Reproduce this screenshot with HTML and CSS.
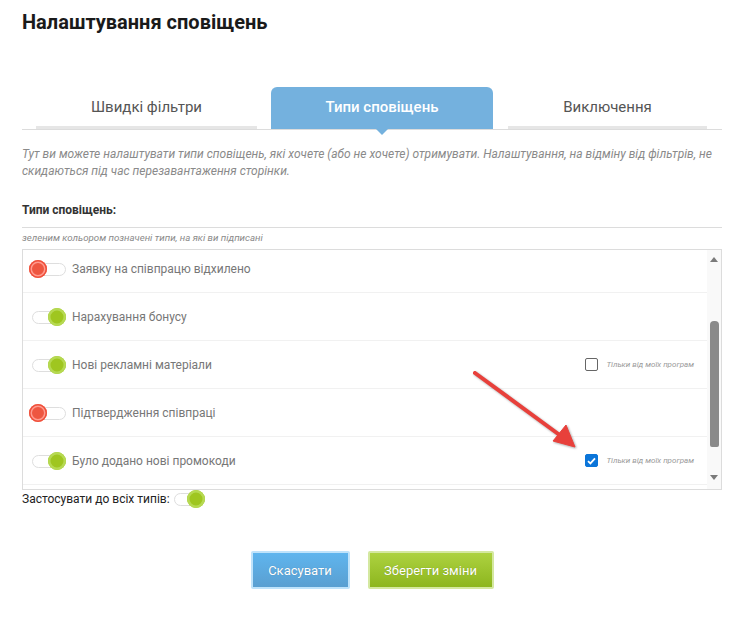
FILE: index.html
```html
<!DOCTYPE html>
<html lang="uk">

<head>
    <meta charset="UTF-8">
    <meta name="viewport" content="width=device-width, initial-scale=1.0">
    <title>Налаштування сповіщень</title>
    <link rel="stylesheet" href="styles.css">
</head>

<body>
    <div class="page">
        <h1>Налаштування сповіщень</h1>

        <div class="tabs">
            <div class="tab tab-first">Швидкі фільтри</div>
            <div class="tab tab-active">Типи сповіщень</div>
            <div class="tab tab-last">Виключення</div>
        </div>

        <div class="explanation">
            Тут ви можете налаштувати типи сповіщень, які хочете (або не хочете) отримувати. Налаштування, на відміну від фільтрів, не
            скидаються під час перезавантаження сторінки.
        </div>

        <div class="types-title">Типи сповіщень:</div>
        <div class="types-hint">зеленим кольором позначені типи, на які ви підписані</div>

        <div class="types-box">
            <div class="types-list">
                <div class="type-row">
                    <span class="toggle off"><span class="knob"></span></span>
                    <span class="type-label">Заявку на співпрацю відхилено</span>
                </div>
                <div class="type-row">
                    <span class="toggle on"><span class="knob"></span></span>
                    <span class="type-label">Нарахування бонусу</span>
                </div>
                <div class="type-row">
                    <span class="toggle on"><span class="knob"></span></span>
                    <span class="type-label">Нові рекламні матеріали</span>
                    <label class="own-only"><span class="check"></span>Тільки від моїх програм</label>
                </div>
                <div class="type-row">
                    <span class="toggle off"><span class="knob"></span></span>
                    <span class="type-label">Підтвердження співпраці</span>
                </div>
                <div class="type-row">
                    <span class="toggle on"><span class="knob"></span></span>
                    <span class="type-label">Було додано нові промокоди</span>
                    <label class="own-only"><span class="check checked"><svg width="9" height="8" viewBox="0 0 9 8"><path d="M1 4.2 L3.4 6.4 L8 1.4" fill="none" stroke="#fff" stroke-width="1.8"/></svg></span>Тільки від моїх програм</label>
                </div>
            </div>
            <div class="scrollbar">
                <span class="arrow-up"></span>
                <div class="track"><div class="thumb"></div></div>
                <span class="arrow-down"></span>
            </div>
            <svg class="pointer" width="120" height="90" viewBox="0 0 120 90">
                <g fill="#e8403b" stroke="#e8403b">
                    <line x1="4" y1="3" x2="90" y2="66" stroke-width="4" stroke-linecap="round"/>
                    <polygon points="104,77 82,71 95,55" stroke-width="1" stroke-linejoin="round"/>
                </g>
            </svg>
        </div>

        <div class="apply-all">
            <span>Застосувати до всіх типів:</span>
            <span class="toggle on small"><span class="knob"></span></span>
        </div>

        <div class="buttons">
            <button class="btn btn-cancel">Скасувати</button>
            <button class="btn btn-save">Зберегти зміни</button>
        </div>
    </div>
</body>

</html>
```

FILE: styles.css
```css
body {
    font-family: Roboto, "Noto Sans", Arial, sans-serif;
    margin: 0;
    padding: 0;
    background-color: white;
    color: #222;
}

.page {
    width: 700px;
    margin-left: 22px;
}

h1 {
    font-size: 20px;
    line-height: 24px;
    font-weight: bold;
    margin: 10px 0 0;
    color: #1a1a1a;
}

.tabs {
    display: flex;
    align-items: flex-end;
    margin-top: 53px;
    padding-left: 14px;
    border-bottom: 1px solid #dcdcdc;
    height: 42px;
}

.tab {
    height: 42px;
    box-sizing: border-box;
    text-align: center;
    font-size: 15px;
    line-height: 41px;
    color: #555;
    border-bottom: 3px solid #e6e6e6;
}

.tab-first {
    width: 221px;
}

.tab-active {
    position: relative;
    width: 222px;
    margin-left: 14px;
    border-bottom: none;
    background-color: #74b1de;
    border-radius: 6px 6px 0 0;
    color: white;
    font-weight: 500;
    line-height: 40px;
}

.tab-active::after {
    content: "";
    position: absolute;
    left: 50%;
    bottom: -6px;
    margin-left: -6px;
    border-left: 6px solid transparent;
    border-right: 6px solid transparent;
    border-top: 6px solid #74b1de;
}

.tab-last {
    width: 199px;
    margin-left: 15px;
}

.explanation {
    margin-top: 16px;
    font-size: 12px;
    line-height: 17px;
    font-style: italic;
    color: #8a8a8a;
}

.types-title {
    margin-top: 23px;
    font-size: 12px;
    line-height: 15px;
    font-weight: bold;
    color: #333;
    padding-bottom: 9px;
    border-bottom: 1px solid #dcdcdc;
}

.types-hint {
    font-size: 9.7px;
    line-height: 12px;
    font-style: italic;
    color: #8a8a8a;
    padding: 4px 0 5px;
}

.types-box {
    position: relative;
    display: flex;
    height: 239px;
    border: 1px solid #dcdcdc;
    overflow: hidden;
}

.types-list {
    flex: 1;
    margin-top: -5px;
}

.type-row {
    display: flex;
    align-items: center;
    height: 47px;
    padding-left: 6px;
    padding-right: 13px;
    border-bottom: 1px solid #f1f1f1;
}

.toggle {
    position: relative;
    display: inline-block;
    width: 37px;
    height: 18px;
    flex-shrink: 0;
}

.toggle::before {
    content: "";
    position: absolute;
    left: 3px;
    right: 0;
    top: 3px;
    height: 11px;
    border: 1px solid #dedede;
    border-radius: 7px;
    background-color: white;
}

.knob {
    position: absolute;
    top: 0;
    width: 18px;
    height: 18px;
    border-radius: 50%;
    box-sizing: border-box;
}

.off .knob {
    left: 0;
    background-color: #ee5640;
    box-shadow: inset 0 0 0 1.5px #ef4f3a, inset 0 0 0 3px #ff9a8e;
}

.on .knob {
    right: 0;
    background-color: #9fc620;
    box-shadow: inset 0 0 0 2.5px #b6d952;
}

.type-label {
    margin-left: 6px;
    font-size: 12px;
    color: #777;
}

.own-only {
    margin-left: auto;
    display: flex;
    align-items: center;
    font-size: 8px;
    font-style: italic;
    color: #9a9a9a;
}

.check {
    display: inline-flex;
    align-items: center;
    justify-content: center;
    width: 13px;
    height: 13px;
    box-sizing: border-box;
    border: 1px solid #666;
    border-radius: 2px;
    margin-right: 8px;
    background-color: white;
}

.check.checked {
    background-color: #0b75d9;
    border-color: #0b75d9;
}

.scrollbar {
    width: 14px;
    display: flex;
    flex-direction: column;
    align-items: center;
    background-color: #f9f9f9;
}

.arrow-up {
    margin-top: 7px;
    border-left: 4.5px solid transparent;
    border-right: 4.5px solid transparent;
    border-bottom: 5px solid #7a7a7a;
}

.track {
    flex: 1;
    width: 9px;
    padding-top: 59px;
    padding-bottom: 24px;
}

.thumb {
    height: 126px;
    background-color: #8a8a8a;
    border-radius: 4px 4px 2px 2px;
}

.arrow-down {
    margin-bottom: 9px;
    border-left: 4.5px solid transparent;
    border-right: 4.5px solid transparent;
    border-top: 5px solid #7a7a7a;
}

.pointer {
    position: absolute;
    left: 448px;
    top: 120px;
    filter: drop-shadow(1px 1px 1px rgba(0, 0, 0, 0.35));
}

.apply-all {
    display: flex;
    align-items: center;
    height: 18px;
    font-size: 12px;
    color: #222;
}

.apply-all .toggle {
    margin-left: 1px;
    width: 34px;
}

.buttons {
    display: flex;
    justify-content: center;
    gap: 18px;
    margin-top: 43px;
}

.btn {
    font-family: Roboto, Arial, sans-serif;
    font-size: 13px;
    color: white;
    height: 38px;
    border-radius: 2px;
    text-shadow: 0 0 1px rgba(0, 0, 0, 0.25);
    cursor: pointer;
}

.btn-cancel {
    width: 99px;
    border: 2px solid #bfe3fb;
    background: linear-gradient(#5fb5ee, #5a9fd1);
}

.btn-save {
    width: 126px;
    border: 2px solid #d4e8a0;
    background: linear-gradient(#add240, #8db61e);
}
```
